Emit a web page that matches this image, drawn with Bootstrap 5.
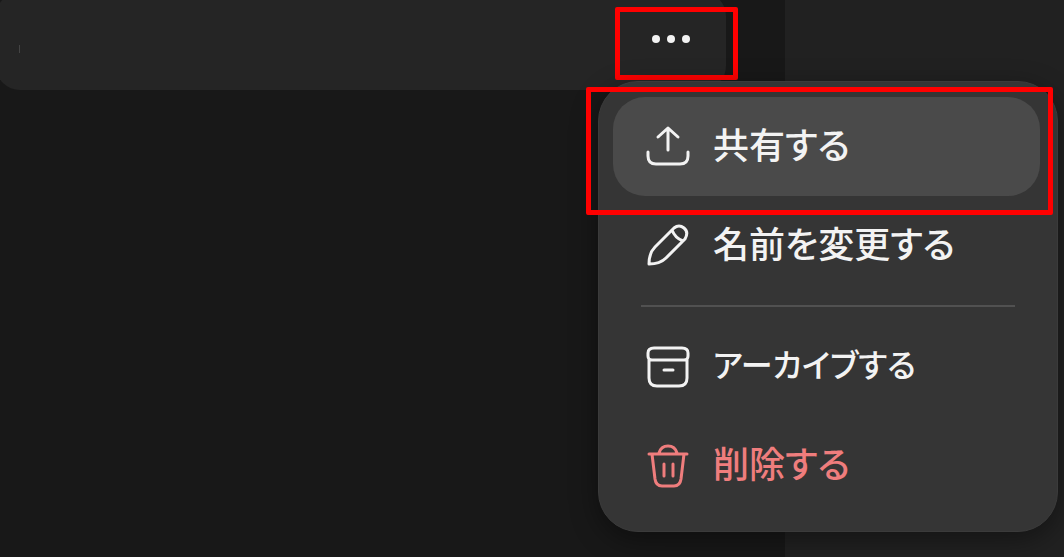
<!DOCTYPE html>
<html lang="ja">
<head>
<meta charset="utf-8">
<meta name="viewport" content="width=device-width, initial-scale=1">
<title>チャットメニュー</title>
<link href="https://cdn.jsdelivr.net/npm/bootstrap@5.3.0/dist/css/bootstrap.min.css" rel="stylesheet">
<style>
  body { background: #181818; color: #f3f3f3; font-family: "Noto Sans CJK JP", sans-serif; }
  .chat-list { min-width: 0; }
  .chat-row { height: 98px; margin: -8px 59px 0 -4px; background: #252525; border-radius: 24px; }
  .caret { width: 1px; height: 8px; margin: 16px 0 0 23px; background: #444; }
  .side-panel { flex: 0 0 279px; background: #212121; }
  .more-wrap { margin-right: -12px; padding-top: 8px; }
  .more-btn { width: 123px; height: 73px; margin-top: 7px; padding: 0 12px 10px 0; border: 5px solid #f00; border-radius: 2px; background: none; color: #f3f3f3; line-height: 1; }
  .chat-menu { top: 89px; right: -320px; width: 460px; padding: 15px 17px 16px 14px; background: #353535; border: 1px solid #3b3b3b; border-radius: 40px; box-shadow: 0 8px 28px rgba(0,0,0,.4); z-index: 10; }
  .menu-btn { height: 99px; padding: 0 32px; gap: 22px; border: 0; border-radius: 32px; background: none; color: inherit; font-size: 36px; font-weight: 500; line-height: 48px; font-feature-settings: "palt"; white-space: nowrap; }
  .menu-btn span { padding-bottom: 8px; }
  .menu-btn.compact { font-size: 32px; }
  .menu-btn.current { background: #4a4a4a; }
  .menu-btn.danger { color: #ef7d7d; }
  .menu-line { height: 2px; margin: 10px 25px 10px 28px; border: 0; background: #515151; opacity: 1; }
  .menu-icon { width: 46px; height: 46px; flex: none; fill: none; stroke: currentColor; stroke-width: 3; stroke-linecap: round; stroke-linejoin: round; }
  .callout { top: -10px; right: -13px; bottom: -19px; left: -27px; border: 5px solid #f00; border-radius: 2px; pointer-events: none; }
</style>
</head>
<body>
<div class="d-flex min-vh-100 overflow-hidden">
  <main class="chat-list flex-grow-1">
    <div class="chat-row d-flex align-items-start justify-content-between">
      <div class="caret align-self-center"></div>
      <div class="more-wrap position-relative">
        <button class="more-btn d-flex align-items-center justify-content-center" type="button" aria-label="その他" aria-expanded="true">
          <svg width="42" height="12" viewBox="0 0 42 12" fill="currentColor"><circle cx="6" cy="6" r="4"/><circle cx="21" cy="6" r="4"/><circle cx="36" cy="6" r="4"/></svg>
        </button>
        <div class="chat-menu position-absolute">
          <div class="position-relative">
            <button class="menu-btn current d-flex align-items-center w-100" type="button">
              <svg class="menu-icon" viewBox="0 0 46 46"><path d="M23 26V4M13 13l10-9 10 9M3 28v4q0 8 8 8h24q8 0 8-8v-4"/></svg><span>共有する</span></button>
            <div class="callout position-absolute"></div>
          </div>
          <button class="menu-btn d-flex align-items-center w-100" type="button">
            <svg class="menu-icon" viewBox="0 0 46 46"><path d="M4 41q0-11 6-17L29 5q5-4 10 0t1 11L21 35q-6 6-17 6zM27 7q3 8 11 11"/></svg><span>名前を変更する</span></button>
          <hr class="menu-line">
          <button class="menu-btn compact d-flex align-items-center w-100" type="button">
            <svg class="menu-icon" viewBox="0 0 46 46"><path d="M9 4h28q6 0 6 5v3q0 4-4 4H7q-4 0-4-4V9q0-5 6-5zM4 16v18q0 8 8 8h22q8 0 8-8V16M19 26h9"/></svg><span>アーカイブする</span></button>
          <button class="menu-btn danger d-flex align-items-center w-100" type="button">
            <svg class="menu-icon" viewBox="0 0 46 46"><path d="M4 11h38M7 11l3 25q1 7 7 7h12q6 0 7-7l3-25M14 10q2-7 9-7t9 7M19 21v12M28 21v12"/></svg><span>削除する</span></button>
        </div>
      </div>
    </div>
  </main>
  <aside class="side-panel"></aside>
</div>
<script src="https://cdn.jsdelivr.net/npm/bootstrap@5.3.0/dist/js/bootstrap.bundle.min.js"></script>
</body>
</html>
